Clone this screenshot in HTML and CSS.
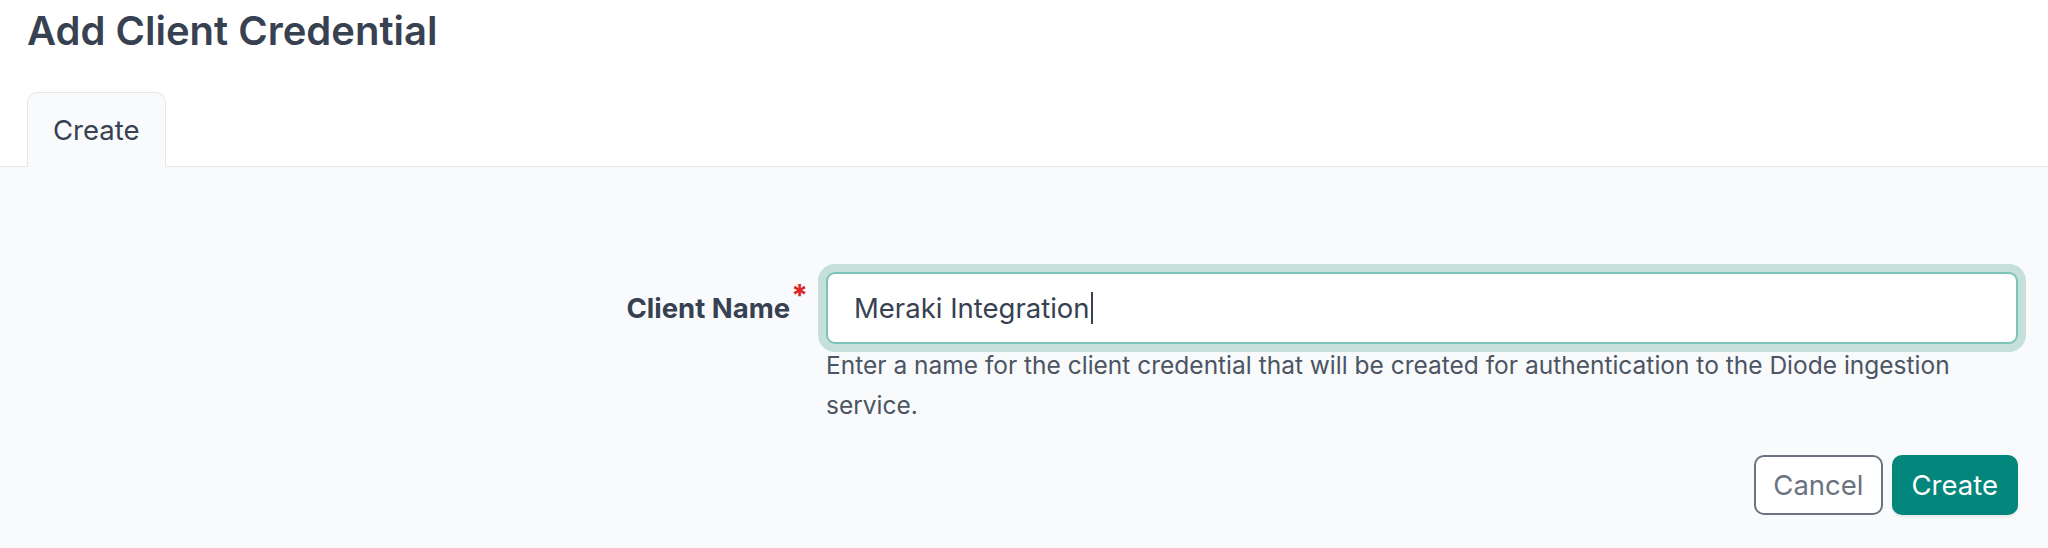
FILE: index.html
```html
<!DOCTYPE html>
<html lang="en">
<head>
<meta charset="utf-8">
<title>Add Client Credential</title>
<link rel="stylesheet" href="styles.css">
</head>
<body>
<div class="page">
  <h1 class="title">Add Client Credential</h1>
  <div class="tabs">
    <div class="tab">Create</div>
  </div>
  <div class="panel">
    <form class="form">
      <div class="row">
        <label class="label">Client Name<span class="req">*</span></label>
        <div class="control">
          <div class="input" role="textbox">Meraki Integration<span class="caret"></span></div>
          <p class="help">Enter a name for the client credential that will be created for authentication to the Diode ingestion service.</p>
        </div>
      </div>
      <div class="actions">
        <button type="button" class="btn btn-cancel">Cancel</button>
        <button type="button" class="btn btn-primary">Create</button>
      </div>
    </form>
  </div>
</div>
</body>
</html>
```
FILE: styles.css
```css
* { box-sizing: border-box; }
html, body {
  margin: 0;
  padding: 0;
  background: #ffffff;
  font-family: Inter, "Noto Sans", "Liberation Sans", sans-serif;
  color: #374151;
}
.page {
  display: flex;
  flex-direction: column;
  height: 548px;
}
.title {
  margin: 7px 0 0 27px;
  font-size: 40px;
  line-height: 48px;
  font-weight: 600;
  color: #374151;
}
.tabs {
  display: flex;
  margin-top: 37px;
  padding-left: 27px;
  border-bottom: 1px solid #e5e7eb;
}
.tab {
  height: 75px;
  margin-bottom: -1px;
  padding: 0 25px;
  display: flex;
  align-items: center;
  background: #f9fafb;
  border: 1px solid #e5e7eb;
  border-bottom: none;
  border-radius: 10px 10px 0 0;
  font-size: 27.5px;
  color: #374151;
}
.panel {
  flex: 1;
  background: #f9fafb;
  padding: 105px 30px 0 0;
}
.row {
  display: grid;
  grid-template-columns: 1fr 1192px;
  column-gap: 18px;
  align-items: start;
}
.label {
  height: 72px;
  display: flex;
  align-items: center;
  justify-content: flex-end;
  font-size: 27.5px;
  font-weight: 700;
  color: #374151;
}
.req {
  align-self: flex-start;
  margin-top: 13px;
  margin-left: 1px;
  font-size: 30px;
  line-height: 20px;
  color: #dc2626;
  font-weight: 700;
}
.input {
  height: 72px;
  display: flex;
  align-items: center;
  padding: 0 26px;
  background: #ffffff;
  border: 2px solid #7fc4bc;
  border-radius: 9px;
  box-shadow: 0 0 0 8px #c5dfdb;
  font-size: 27.5px;
  color: #374151;
}
.caret {
  display: inline-block;
  width: 2px;
  height: 32px;
  margin-left: 1px;
  background: #374151;
}
.help {
  margin: 1px 0 0 0;
  font-size: 24.5px;
  line-height: 40px;
  color: #4b5563;
}
.actions {
  display: flex;
  justify-content: flex-end;
  gap: 9px;
  margin-top: 30px;
}
.btn {
  height: 60px;
  border-radius: 10px;
  font-family: Inter, "Noto Sans", "Liberation Sans", sans-serif;
  font-size: 27.5px;
  cursor: pointer;
}
.btn-cancel {
  padding: 0 17px;
  background: #ffffff;
  border: 2px solid #6b7280;
  color: #6b7280;
}
.btn-primary {
  padding: 0 18px;
  background: #03867b;
  border: 2px solid #03867b;
  color: #ffffff;
  box-shadow: 0 2px 3px rgba(0, 0, 0, 0.08);
}
```
